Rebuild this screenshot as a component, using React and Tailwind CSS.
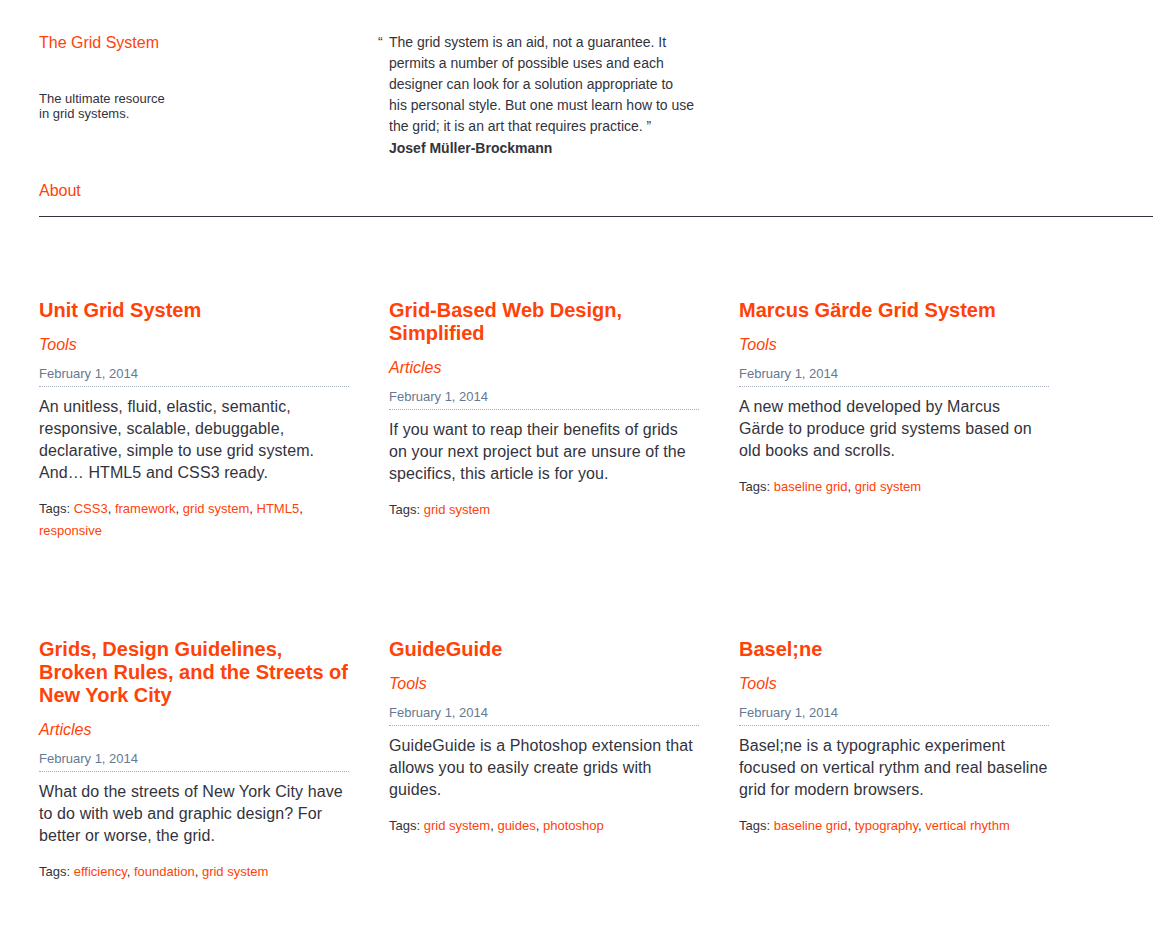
import React from "react";

const posts = [
  {
    title: "Unit Grid System",
    category: "Tools",
    body: "An unitless, fluid, elastic, semantic, responsive, scalable, debuggable, declarative, simple to use grid system. And… HTML5 and CSS3 ready.",
    tags: ["CSS3", "framework", "grid system", "HTML5", "responsive"],
  },
  {
    title: "Grid-Based Web Design, Simplified",
    category: "Articles",
    body: "If you want to reap their benefits of grids on your next project but are unsure of the specifics, this article is for you.",
    tags: ["grid system"],
  },
  {
    title: "Marcus Gärde Grid System",
    category: "Tools",
    body: "A new method developed by Marcus Gärde to produce grid systems based on old books and scrolls.",
    tags: ["baseline grid", "grid system"],
  },
  {
    title: "Grids, Design Guidelines, Broken Rules, and the Streets of New York City",
    category: "Articles",
    body: "What do the streets of New York City have to do with web and graphic design? For better or worse, the grid.",
    tags: ["efficiency", "foundation", "grid system"],
  },
  {
    title: "GuideGuide",
    category: "Tools",
    body: "GuideGuide is a Photoshop extension that allows you to easily create grids with guides.",
    tags: ["grid system", "guides", "photoshop"],
  },
  {
    title: "Basel;ne",
    category: "Tools",
    body: "Basel;ne is a typographic experiment focused on vertical rythm and real baseline grid for modern browsers.",
    tags: ["baseline grid", "typography", "vertical rhythm"],
  },
];

const PostCard = ({ post }) => (
  <article className="w-[310px] mb-[96px]">
    <h2 className="text-[20px] leading-[23px] font-bold text-[#ff4208]">
      <a href="#">{post.title}</a>
    </h2>
    <p className="mt-[12px] text-[16px] leading-[22px] italic text-[#ff4208]">{post.category}</p>
    <div className="mt-[8px] pb-[2px] border-b border-dotted border-[#a7aebb] text-[13px] leading-[20px] text-[#667892]">
      February 1, 2014
    </div>
    <p className="mt-[9px] text-[16px] leading-[22px] tracking-[0.1px] text-[#33333d]">{post.body}</p>
    <p className="mt-[14px] text-[13px] leading-[22px] text-[#33333d]">
      Tags:{" "}
      {post.tags.map((t, i) => (
        <span key={t}>
          <a href="#" className="text-[#ff4208]">
            {t}
          </a>
          {i < post.tags.length - 1 ? ", " : ""}
        </span>
      ))}
    </p>
  </article>
);

export default function App() {
  return (
    <div className="min-h-screen bg-white font-['Liberation_Sans',Arial,sans-serif] text-[#33333d]">
      <header className="pl-[39px] pt-[32px]">
        <div className="flex">
          <div className="w-[339px]">
            <a href="#" className="block text-[16px] leading-[22px] text-[#ff4208]">
              The Grid System
            </a>
            <p className="mt-[37px] text-[13px] leading-[15px]">
              The ultimate resource
              <br />
              in grid systems.
            </p>
          </div>
          <blockquote className="w-[340px] pl-[11px] text-[14px] leading-[21px] whitespace-nowrap">
            <p className="-indent-[11px]">
              <span className="inline-block w-[11px] indent-0">“</span>The grid system is an aid, not a guarantee. It
              <br />
              permits a number of possible uses and each
              <br />
              designer can look for a solution appropriate to
              <br />
              his personal style. But one must learn how to use
              <br />
              the grid; it is an art that requires practice. ”
            </p>
            <p className="mt-[1px] font-bold">Josef Müller-Brockmann</p>
          </blockquote>
        </div>
        <nav className="mt-[20px]">
          <a href="#" className="text-[16px] leading-[22px] text-[#ff4208]">
            About
          </a>
        </nav>
        <div className="mt-[13px] border-t border-[#33333d]" />
      </header>

      <main className="pl-[39px] pt-[82px]">
        <div className="grid grid-cols-[350px_350px_310px] items-start">
          {posts.map((p) => (
            <PostCard key={p.title} post={p} />
          ))}
        </div>
      </main>
    </div>
  );
}
